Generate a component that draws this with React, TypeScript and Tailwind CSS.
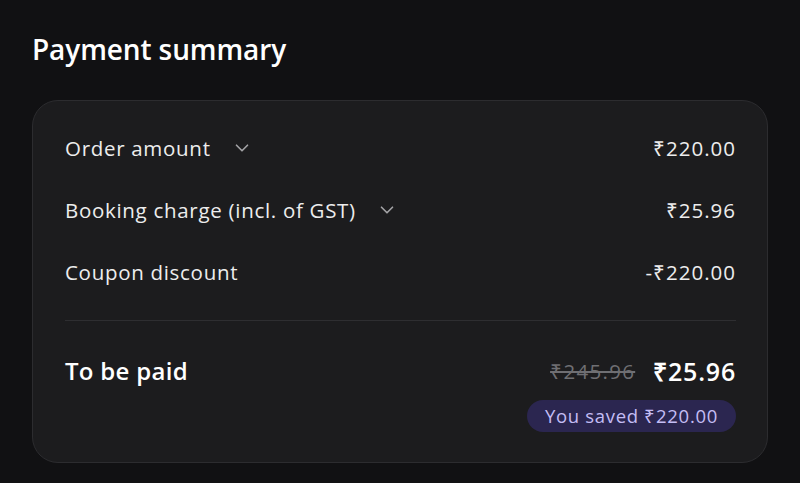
import { ChevronDown } from "lucide-react";

type Row = { label: string; value: string; expandable?: boolean };

const rows: Row[] = [
  { label: "Order amount", value: "₹220.00", expandable: true },
  { label: "Booking charge (incl. of GST)", value: "₹25.96", expandable: true },
  { label: "Coupon discount", value: "-₹220.00" },
];

export default function App() {
  return (
    <div className="min-h-[483px] w-[800px] bg-[#111113] px-8 pt-[29px] font-['Open_Sans',sans-serif] text-[#ededed]">
      <h1 className="text-[28px] font-semibold leading-[40px] tracking-[-0.1px] text-white">Payment summary</h1>

      <div className="mt-[31px] rounded-[26px] border border-[#2c2c2f] bg-[#1c1c1e] pl-8 pr-[31px] pb-[30px] pt-[33px]">
        <div className="flex flex-col gap-[34px]">
          {rows.map((r) => (
            <div key={r.label} className="flex items-center justify-between text-[20.5px] leading-[28px] tracking-[0.7px]">
              <div className="flex items-center gap-[20px]">
                <span>{r.label}</span>
                {r.expandable && <ChevronDown className="h-[22px] w-[22px] text-[#a3a3a6]" strokeWidth={1.8} />}
              </div>
              <span className="tracking-[1px]">{r.value}</span>
            </div>
          ))}
        </div>

        <div className="mt-[34px] h-px bg-[#2e2e31]" />

        <div className="mt-[30px] flex items-start justify-between">
          <span className="text-[24px] font-semibold leading-[40px] tracking-[0.3px] text-white">To be paid</span>
          <div className="flex flex-col items-end">
            <div className="flex items-center gap-[18px]">
              <span className="text-[20.5px] tracking-[1.3px] text-[#6f6f73] line-through decoration-[#6f6f73]">₹245.96</span>
              <span className="text-[25px] font-semibold leading-[40px] tracking-[0.8px] text-white">₹25.96</span>
            </div>
            <span className="mt-[9px] rounded-full bg-[#2b2650] px-[18px] py-[3px] text-[18.5px] font-medium leading-[26px] tracking-[0.7px] text-[#c4bdf5]">
              You saved ₹220.00
            </span>
          </div>
        </div>
      </div>
    </div>
  );
}
